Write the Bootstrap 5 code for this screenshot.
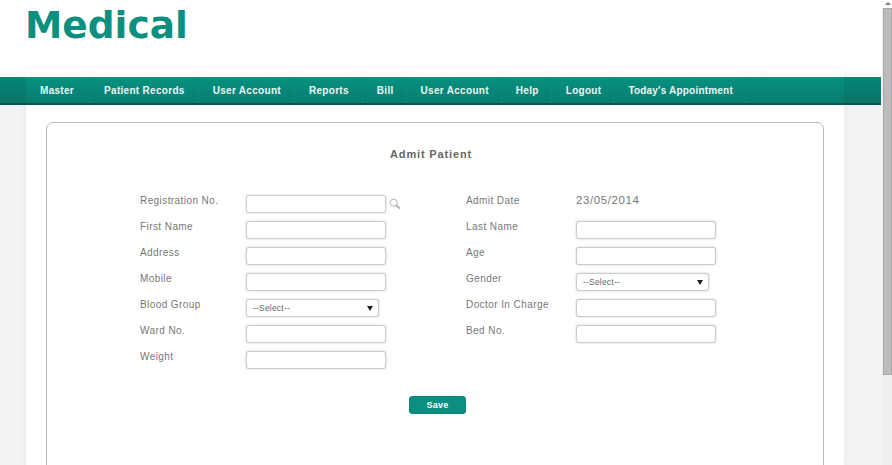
<!DOCTYPE html>
<html lang="en">
<head>
<meta charset="utf-8">
<title>Medical</title>
<link href="https://cdn.jsdelivr.net/npm/bootstrap@5.3.0/dist/css/bootstrap.min.css" rel="stylesheet">
<style>
html,body{height:100%;overflow:hidden;}
body{font-family:"Liberation Sans",Arial,sans-serif;background:#f2f3f5;color:#777;}
.shell{height:465px;}
.page-area{width:882px;flex:none;height:465px;overflow:hidden;}
.top-strip{height:77px;background:#fff;padding:2px 0 0 25px;}
.logo-word{font-family:"DejaVu Sans",sans-serif;font-weight:700;font-size:37.5px;line-height:46px;color:#0b8f80;}
.teal-band{position:relative;z-index:2;width:881px;height:28px;background:linear-gradient(to right,rgba(0,0,0,.08) 26px,transparent 26px,transparent 844px,rgba(0,0,0,.08) 844px),linear-gradient(#05917f,#0a7d70);border-bottom:2px solid #06584f;padding-left:26px;}
.teal-band .nav-link{color:#eaf7f5;font-size:10px;font-weight:700;height:26px;line-height:27px;padding:0 13px 0 14px;letter-spacing:.3px;border-right:1px solid #0d8a7c;}
.teal-band .nav-item:first-child .nav-link{padding-right:15px;}
.teal-band .nav-item:nth-child(n+5) .nav-link{padding-right:12px;}
.teal-band .nav-item:last-child .nav-link{letter-spacing:.2px;}
.sheet{width:818px;margin:-36px 0 0 26px;height:396px;background:#fff;padding:53px 20px 0;box-shadow:0 0 8px rgba(0,0,0,.06);}
.form-box{width:778px;height:400px;border:1px solid #bbb;border-radius:7px;background:#fff;padding-top:24px;}
.form-title{font-size:11px;font-weight:700;letter-spacing:.85px;color:#666;line-height:14px;margin:0 0 34px;padding-right:8px;text-align:center;}
.field-grid{display:grid;grid-template-columns:106px 220px 110px 1fr;grid-auto-rows:26px;padding-left:93px;}
.field-label{font-size:10px;line-height:12px;letter-spacing:.42px;color:#777;margin:0;}
.text-box{width:140px;height:18px;border:1px solid #ccc;border-radius:3px;box-shadow:0 0 2px rgba(0,0,0,.25);background:#fff;padding:0 4px;display:block;}
.pick-box{display:block;appearance:none;width:133px;height:18px;border:1px solid #ccc;border-radius:3px;box-shadow:0 0 2px rgba(0,0,0,.25);background:#fff url("data:image/svg+xml,%3Csvg xmlns='http://www.w3.org/2000/svg' width='6' height='5'%3E%3Cpath d='M0 0h6L3 5z' fill='%23222'/%3E%3C/svg%3E") no-repeat right 5px center;font-size:8.5px;color:#666;padding:0 6px;letter-spacing:.2px;}
.box-row{display:flex;align-items:center;gap:3px;height:18px;}
.date-val{font-size:11.5px;letter-spacing:.6px;color:#777;line-height:10px;}
.save-btn{width:57px;height:18px;padding:0;background:#0b8f80;border:1px solid #0a8577;border-radius:3px;color:#fff;font-size:9px;font-weight:700;line-height:16px;letter-spacing:.3px;}
.save-row{padding-left:5px;margin-top:19px;}
.bar-col{width:10px;flex:none;height:465px;background:#efefef;}
.bar-arrow{height:8px;background:#fff;display:flex;justify-content:center;padding:2px 0 0 2px;}
.bar-arrow svg{display:block;}
.bar-thumb{margin-left:1px;height:367px;background:#bcbcbc;border:1px solid #a8a8a8;}
</style>
</head>
<body>
<div class="shell d-flex">
  <div class="page-area">
    <div class="top-strip"><div class="logo-word">Medical</div></div>
    <nav class="teal-band">
      <ul class="nav">
        <li class="nav-item"><a class="nav-link" href="#">Master</a></li>
        <li class="nav-item"><a class="nav-link" href="#">Patient Records</a></li>
        <li class="nav-item"><a class="nav-link" href="#">User Account</a></li>
        <li class="nav-item"><a class="nav-link" href="#">Reports</a></li>
        <li class="nav-item"><a class="nav-link" href="#">Bill</a></li>
        <li class="nav-item"><a class="nav-link" href="#">User Account</a></li>
        <li class="nav-item"><a class="nav-link" href="#">Help</a></li>
        <li class="nav-item"><a class="nav-link" href="#">Logout</a></li>
        <li class="nav-item"><a class="nav-link" href="#">Today's Appointment</a></li>
      </ul>
    </nav>
    <div class="sheet">
      <div class="form-box">
        <h1 class="form-title">Admit Patient</h1>
        <form>
          <div class="field-grid">
            <label class="field-label">Registration No.</label>
            <div class="box-row"><input class="text-box" type="text">
              <svg width="12" height="12" viewBox="0 0 12 12" fill="none"><circle cx="4.6" cy="4.6" r="3.4" stroke="#bbb" stroke-width="1.1"/><path d="M7.2 7.2L11 10.6" stroke="#aaa" stroke-width="1.6"/></svg></div>
            <label class="field-label">Admit Date</label>
            <div class="date-val">23/05/2014</div>

            <label class="field-label">First Name</label><div><input class="text-box" type="text"></div>
            <label class="field-label">Last Name</label><div><input class="text-box" type="text"></div>

            <label class="field-label">Address</label><div><input class="text-box" type="text"></div>
            <label class="field-label">Age</label><div><input class="text-box" type="text"></div>

            <label class="field-label">Mobile</label><div><input class="text-box" type="text"></div>
            <label class="field-label">Gender</label><div><select class="pick-box"><option>--Select--</option></select></div>

            <label class="field-label">Blood Group</label><div><select class="pick-box"><option>--Select--</option></select></div>
            <label class="field-label">Doctor In Charge</label><div><input class="text-box" type="text"></div>

            <label class="field-label">Ward No.</label><div><input class="text-box" type="text"></div>
            <label class="field-label">Bed No.</label><div><input class="text-box" type="text"></div>

            <label class="field-label">Weight</label><div><input class="text-box" type="text"></div>
          </div>
          <div class="d-flex justify-content-center save-row"><button type="button" class="btn save-btn">Save</button></div>
        </form>
      </div>
    </div>
  </div>
  <div class="bar-col">
    <div class="bar-arrow"><svg width="6" height="3" viewBox="0 0 6 3"><path d="M0 3L3 0l3 3z" fill="#777"/></svg></div>
    <div class="bar-thumb"></div>
  </div>
</div>
<script src="https://cdn.jsdelivr.net/npm/bootstrap@5.3.0/dist/js/bootstrap.bundle.min.js"></script>
</body>
</html>
